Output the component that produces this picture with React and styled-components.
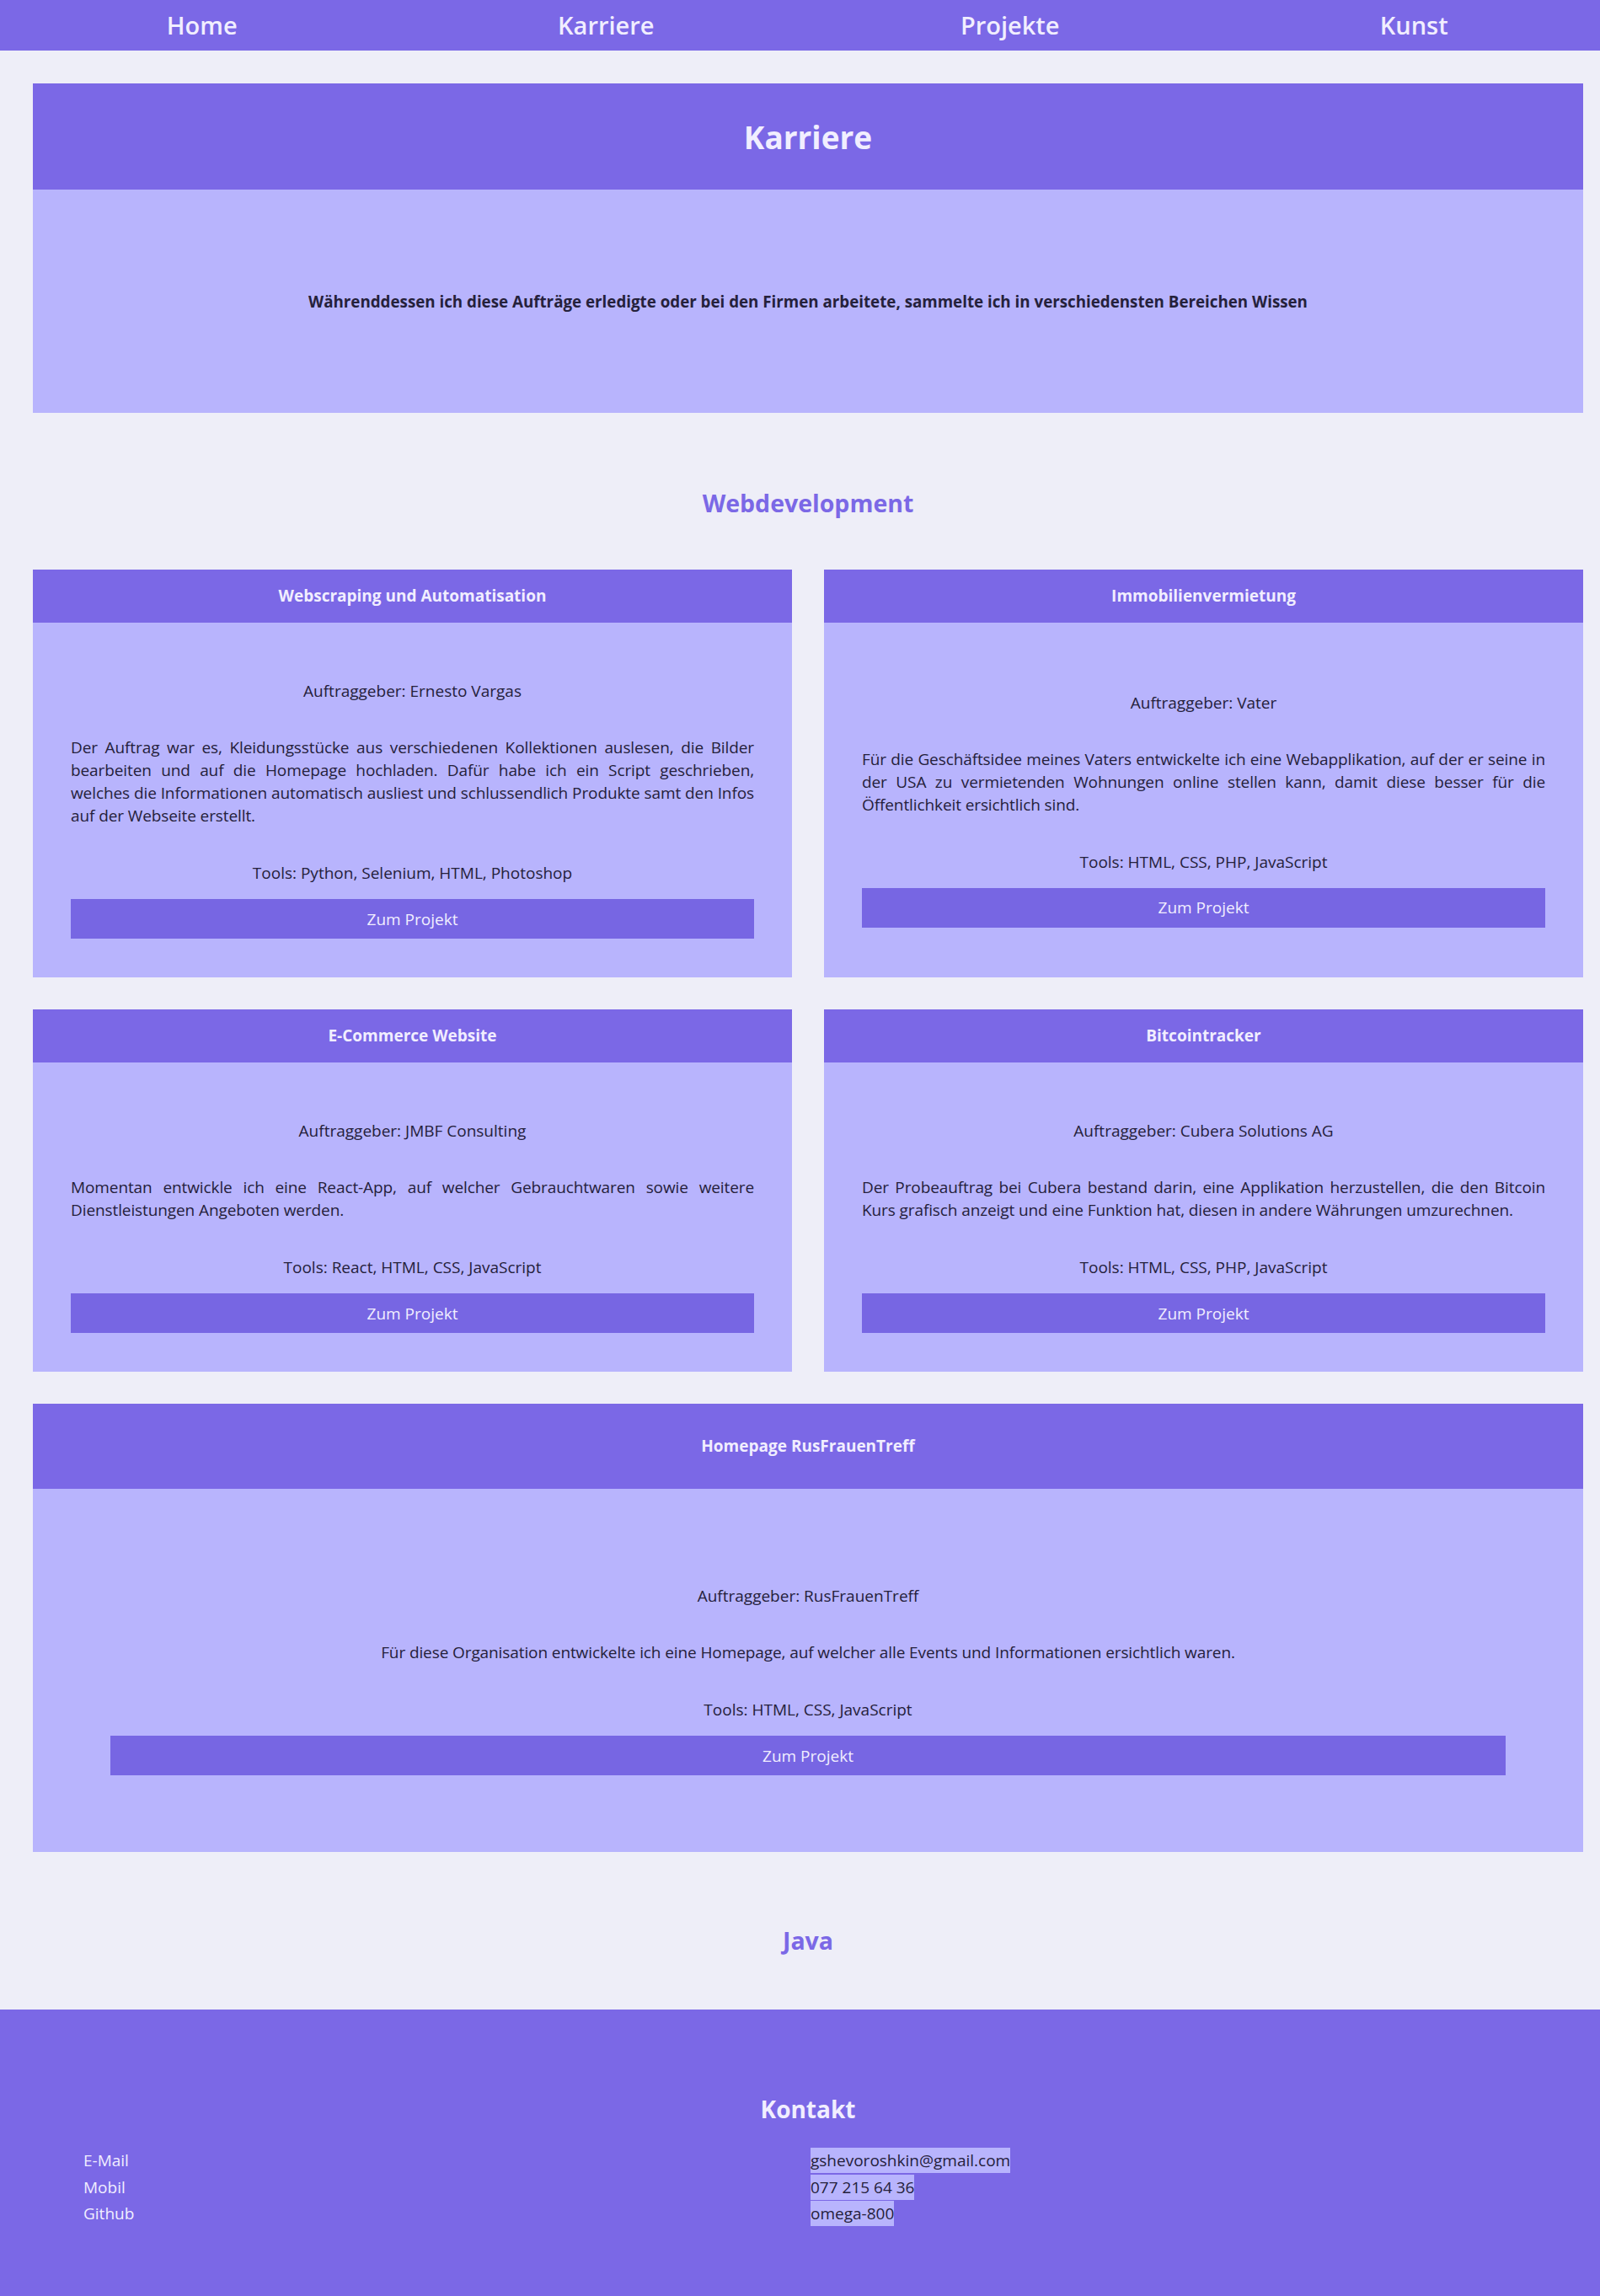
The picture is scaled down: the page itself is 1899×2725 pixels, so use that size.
import React from "react";
import styled, { createGlobalStyle } from "styled-components";

const purple = "#7b68e6";
const buttonPurple = "#7766e3";
const lilac = "#b8b4fd";
const pageBg = "#eeeef8";
const ink = "#25213b";
const pale = "#f1eeff";

const GlobalStyle = createGlobalStyle`
  html, body {
    margin: 0;
    padding: 0;
    overflow-x: hidden;
    background: ${pageBg};
  }
  body {
    font-family: "Open Sans", "Noto Sans", sans-serif;
    color: ${ink};
  }
  * {
    box-sizing: border-box;
  }
`;

const Page = styled.div`
  width: 1918px;
`;

const Nav = styled.nav`
  display: grid;
  grid-template-columns: repeat(4, 1fr);
  align-items: center;
  height: 60px;
  background: ${purple};
`;

const NavLink = styled.a`
  text-align: center;
  color: ${pale};
  font-size: 29px;
  font-weight: 600;
  line-height: 60px;
  text-decoration: none;
`;

const Main = styled.main`
  padding: 39px 39px 0;
`;

const Hero = styled.section`
  background: ${lilac};
`;

const HeroHead = styled.header`
  display: flex;
  align-items: center;
  justify-content: center;
  height: 126px;
  background: ${purple};
`;

const HeroTitle = styled.h1`
  margin: 0;
  color: ${pale};
  font-size: 37px;
  font-weight: 700;
`;

const HeroBody = styled.div`
  display: flex;
  align-items: center;
  justify-content: center;
  height: 265px;
`;

const HeroText = styled.p`
  margin: 0;
  font-size: 18.75px;
  font-weight: 700;
  color: ${ink};
`;

const SectionTitle = styled.h2`
  margin: ${(p) => (p.last ? "87px 0 64px" : "89px 0 61px")};
  text-align: center;
  color: ${purple};
  font-size: 28.5px;
  font-weight: 700;
  line-height: 36px;
`;

const CardGrid = styled.div`
  display: grid;
  grid-template-columns: 1fr 1fr;
  gap: 38px;
`;

const Card = styled.article`
  display: flex;
  flex-direction: column;
  background: ${lilac};
  grid-column: ${(p) => (p.wide ? "span 2" : "auto")};
`;

const CardHead = styled.h3`
  margin: 0;
  padding: ${(p) => (p.wide ? "37px 20px" : "18px 20px")};
  background: ${purple};
  color: ${pale};
  text-align: center;
  font-size: 19px;
  font-weight: 700;
  line-height: 27px;
`;

const CardBody = styled.div`
  flex: 1;
  display: flex;
  flex-direction: column;
  justify-content: center;
  padding: ${(p) => (p.wide ? "114px 92px 91px" : "68px 45px 46px")};
  font-size: 19px;
  line-height: 27px;
`;

const Client = styled.p`
  margin: 0;
  text-align: center;
`;

const Desc = styled.p`
  margin: 40px 0 0;
  letter-spacing: -0.1px;
  text-align: ${(p) => (p.wide ? "center" : "justify")};
`;

const Tools = styled.p`
  margin: 41px 0 0;
  text-align: center;
`;

const ProjectButton = styled.button`
  margin-top: 17px;
  width: 100%;
  height: 47px;
  border: none;
  background: ${buttonPurple};
  color: ${pale};
  font-family: inherit;
  font-size: 19px;
  cursor: pointer;
`;

const Footer = styled.footer`
  padding: 100px 99px 84px;
  background: ${purple};
`;

const FooterTitle = styled.h2`
  margin: 0 0 28px;
  text-align: center;
  color: ${pale};
  font-size: 28px;
  font-weight: 700;
  line-height: 36px;
`;

const ContactGrid = styled.dl`
  display: grid;
  grid-template-columns: 863px 1fr;
  row-gap: 1.5px;
  margin: 0;
  font-size: 19px;
  line-height: 30px;
`;

const Label = styled.dt`
  color: ${pale};
`;

const Value = styled.dd`
  margin: 0;
  span {
    display: inline-block;
    background: ${lilac};
    color: ${ink};
  }
`;

const projects = [
  {
    title: "Webscraping und Automatisation",
    client: "Ernesto Vargas",
    desc: "Der Auftrag war es, Kleidungsstücke aus verschiedenen Kollektionen auslesen, die Bilder bearbeiten und auf die Homepage hochladen. Dafür habe ich ein Script geschrieben, welches die Informationen automatisch ausliest und schlussendlich Produkte samt den Infos auf der Webseite erstellt.",
    tools: "Python, Selenium, HTML, Photoshop",
  },
  {
    title: "Immobilienvermietung",
    client: "Vater",
    desc: "Für die Geschäftsidee meines Vaters entwickelte ich eine Webapplikation, auf der er seine in der USA zu vermietenden Wohnungen online stellen kann, damit diese besser für die Öffentlichkeit ersichtlich sind.",
    tools: "HTML, CSS, PHP, JavaScript",
  },
  {
    title: "E-Commerce Website",
    client: "JMBF Consulting",
    desc: "Momentan entwickle ich eine React-App, auf welcher Gebrauchtwaren sowie weitere Dienstleistungen Angeboten werden.",
    tools: "React, HTML, CSS, JavaScript",
  },
  {
    title: "Bitcointracker",
    client: "Cubera Solutions AG",
    desc: "Der Probeauftrag bei Cubera bestand darin, eine Applikation herzustellen, die den Bitcoin Kurs grafisch anzeigt und eine Funktion hat, diesen in andere Währungen umzurechnen.",
    tools: "HTML, CSS, PHP, JavaScript",
  },
  {
    title: "Homepage RusFrauenTreff",
    client: "RusFrauenTreff",
    desc: "Für diese Organisation entwickelte ich eine Homepage, auf welcher alle Events und Informationen ersichtlich waren.",
    tools: "HTML, CSS, JavaScript",
    wide: true,
  },
];

const contacts = [
  ["E-Mail", "gshevoroshkin@gmail.com"],
  ["Mobil", "077 215 64 36"],
  ["Github", "omega-800"],
];

const App = () => {
  return (
    <Page>
      <GlobalStyle />
      <Nav>
        {["Home", "Karriere", "Projekte", "Kunst"].map((item) => (
          <NavLink key={item} href="#">
            {item}
          </NavLink>
        ))}
      </Nav>

      <Main>
        <Hero>
          <HeroHead>
            <HeroTitle>Karriere</HeroTitle>
          </HeroHead>
          <HeroBody>
            <HeroText>
              Währenddessen ich diese Aufträge erledigte oder bei den Firmen arbeitete, sammelte ich in verschiedensten Bereichen Wissen
            </HeroText>
          </HeroBody>
        </Hero>

        <SectionTitle>Webdevelopment</SectionTitle>

        <CardGrid>
          {projects.map((item) => (
            <Card key={item.title} wide={item.wide}>
              <CardHead wide={item.wide}>{item.title}</CardHead>
              <CardBody wide={item.wide}>
                <Client>Auftraggeber: {item.client}</Client>
                <Desc wide={item.wide}>{item.desc}</Desc>
                <Tools>Tools: {item.tools}</Tools>
                <ProjectButton>Zum Projekt</ProjectButton>
              </CardBody>
            </Card>
          ))}
        </CardGrid>

        <SectionTitle last>Java</SectionTitle>
      </Main>

      <Footer>
        <FooterTitle>Kontakt</FooterTitle>
        <ContactGrid>
          {contacts.map(([label, value]) => (
            <React.Fragment key={label}>
              <Label>{label}</Label>
              <Value>
                <span>{value}</span>
              </Value>
            </React.Fragment>
          ))}
        </ContactGrid>
      </Footer>
    </Page>
  );
};

export default App;
